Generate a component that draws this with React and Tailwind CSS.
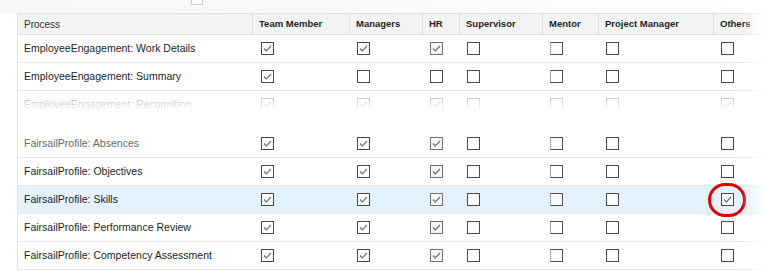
const font = { fontFamily: '"Liberation Sans", Arial, sans-serif' };

const cols = "grid grid-cols-[234px_97px_73px_37px_83px_56px_115px_53px]";

const headers = ["Team Member", "Managers", "HR", "Supervisor", "Mentor", "Project Manager", "Others"];

const rows = [
  { name: "EmployeeEngagement: Work Details", v: [1, 1, 1, 0, 0, 0, 0] },
  { name: "EmployeeEngagement: Summary", v: [1, 0, 0, 0, 0, 0, 0] },
];

const rowsBottom = [
  { name: "FairsailProfile: Absences", v: [1, 1, 1, 0, 0, 0, 0], fade: true },
  { name: "FairsailProfile: Objectives", v: [1, 1, 1, 0, 0, 0, 0] },
  { name: "FairsailProfile: Skills", v: [1, 1, 1, 0, 0, 0, 1], active: true },
  { name: "FairsailProfile: Performance Review", v: [1, 1, 1, 0, 0, 0, 0] },
  { name: "FairsailProfile: Competency Assessment", v: [1, 1, 1, 0, 0, 0, 0] },
];

function Box({ checked, col, faint }) {
  const border = faint
    ? "border-[#c8c8c8]"
    : col === 4
    ? "border-[#4d4d4d] border-l-[#a8a8a8]"
    : col === 2 && checked
    ? "border-[#707070]"
    : "border-[#4a4a4a]";
  const bg = col === 2 && checked ? "bg-[#f6f6f6]" : "bg-white";
  return (
    <div className={`w-[13px] h-[13px] border ${border} ${bg} flex items-center justify-center`}>
      {checked ? (
        <svg width="11" height="11" viewBox="0 0 11 11">
          <polyline points="2,5.5 4.3,7.8 9,3" fill="none" stroke={faint ? "#c4c4c4" : "#6e6e6e"} strokeWidth="1.2" />
        </svg>
      ) : null}
    </div>
  );
}

function Row({ r, faint }) {
  return (
    <div className={`${cols} h-[28px] border-b border-[#e8e8e8] ${r.active ? "bg-[#e4f2fd]" : "bg-white"}`}>
      <div className={`flex items-center pl-[6px] text-[10.5px] ${faint ? "text-[#b3b3b3]" : r.fade ? "text-[#6a6a6a]" : "text-[#1e1e1e]"}`}>
        {r.name}
      </div>
      {r.v.map((c, i) => (
        <div key={i} className={`relative flex items-center ${i === 0 ? "pl-[9px]" : "pl-[8px]"}`}>
          <Box checked={c} col={i} faint={faint} />
          {r.active && i === 6 ? (
            <div className="absolute left-[-5px] top-[-3px] w-[38px] h-[34px] rounded-full border-[3px] border-[#e30000]" />
          ) : null}
        </div>
      ))}
    </div>
  );
}

export default function App() {
  return (
    <div className="relative w-[777px] h-[276px] bg-white overflow-hidden" style={font}>
      <div className="h-[13px] pl-[191px] bg-gradient-to-r from-[#f7f7f7] via-[#fafafa] to-white">
        <div className="w-[12px] h-[5px] border-x border-b border-[#cfcfcf] bg-white" />
      </div>

      <div className="ml-[17px] w-[748px] border-l border-[#e2e2e2]">
        <div className={`${cols} h-[22px] bg-[#f2f3f3] border-t border-b border-[#e0e0e0]`}>
          <div className="flex items-center pl-[6px] text-[10px] text-[#333]">Process</div>
          {headers.map((h) => (
            <div key={h} className="flex items-center pl-[6px] border-l border-[#dedede] text-[9.5px] font-bold text-[#1f1f1f]">
              {h}
            </div>
          ))}
        </div>

        {rows.map((r) => (
          <Row key={r.name} r={r} />
        ))}

        <div className="relative h-[20px] overflow-hidden">
          <Row r={{ name: "EmployeeEngagement: Recognition", v: [1, 1, 1, 0, 0, 0, 1] }} faint />
          <div className="absolute inset-x-0 top-[6px] h-[14px] bg-gradient-to-b from-transparent to-white" />
        </div>

        <div className="h-[19px] bg-white" />

        <div className="relative">
          {rowsBottom.map((r) => (
            <Row key={r.name} r={r} />
          ))}
          <div className="absolute inset-x-0 top-0 h-[6px] bg-gradient-to-b from-white to-transparent" />
        </div>
      </div>

      <div className="absolute top-0 bottom-0 left-[742px] w-[24px] bg-gradient-to-r from-transparent to-white" />
    </div>
  );
}
